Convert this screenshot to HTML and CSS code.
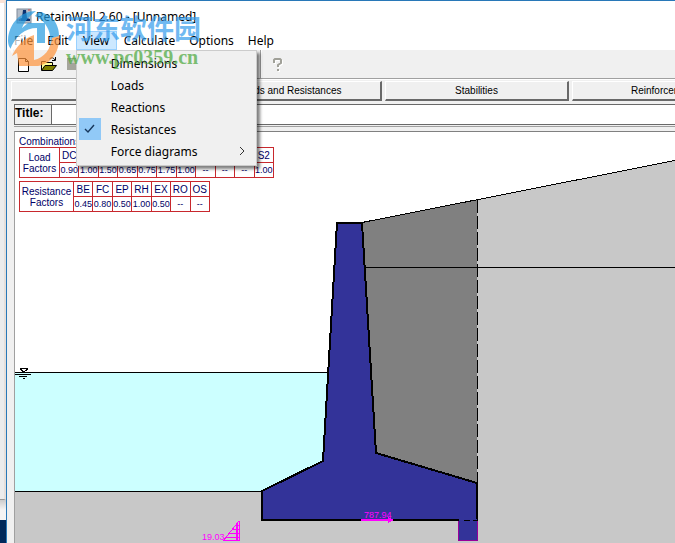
FILE: index.html
```html
<!DOCTYPE html>
<html lang="en">
<head>
<meta charset="utf-8">
<title>RetainWall 2.60</title>
<link rel="stylesheet" href="styles.css">
</head>
<body>
<div class="desktop">
  <div class="desktop-edge"><div class="edge-window"></div><div class="edge-shadow"></div></div>
  <main class="window">
    <header class="titlebar">
      <svg class="app-icon" width="16" height="16" viewBox="0 0 16 16" aria-hidden="true">
        <rect x="1" y="1" width="14" height="14" fill="#b4bdc9" stroke="#7f8b9c"/>
        <path d="M7 2h3l1 8 3 1v2H3v-2l3-1z" fill="#0b3270"/>
        <path d="M1 12h4M12 2h2" stroke="#d74b4b"/>
      </svg>
      <span>RetainWall 2.60 - [Unnamed]</span>
    </header>
    <nav class="menubar">
      <button class="menu-title">File</button>
      <button class="menu-title">Edit</button>
      <div class="menu-holder">
        <button class="menu-title open">View</button>
        <div class="menu">
          <button class="item"><span class="tick"></span><span>Dimensions</span></button>
          <button class="item"><span class="tick"></span><span>Loads</span></button>
          <button class="item"><span class="tick"></span><span>Reactions</span></button>
          <button class="item"><span class="tick on"><svg width="12" height="12" viewBox="0 0 12 12"><path d="M1 6l3 3 6-7" fill="none" stroke="#17375c" stroke-width="1.4"/></svg></span><span>Resistances</span></button>
          <button class="item"><span class="tick"></span><span>Force diagrams</span><svg class="chevron" width="6" height="10" viewBox="0 0 6 10"><path d="M1 1l4 4-4 4" fill="none" stroke="#333"/></svg></button>
        </div>
      </div>
      <button class="menu-title">Calculate</button>
      <button class="menu-title">Options</button>
      <button class="menu-title">Help</button>
    </nav>
    <div class="toolbar">
      <button class="tool" aria-label="New">
        <svg width="18" height="18" viewBox="0 0 18 18"><path d="M3.500 3.500h7l3 3v10h-10z" fill="#fff" stroke="#000"/><path d="M10.500 3.500v3h3" fill="none" stroke="#000"/></svg>
      </button>
      <button class="tool" aria-label="Open">
        <svg width="18" height="18" viewBox="0 0 18 18"><path d="M1.500 15V6.500h4l1 1h6V10" fill="#ffff9a" stroke="#000"/><path d="M1.500 15.500L5 10.500h11.500l-4 5z" fill="#808000" stroke="#000"/><path d="M9.500 4q3-3 5.500 1M15.500 2v3.500H12" fill="none" stroke="#000"/></svg>
      </button>
      <button class="tool" aria-label="Save">
        <svg width="18" height="18" viewBox="0 0 18 18"><path d="M2 3h13v12H2z" fill="#a5a59c"/><path d="M5 4h7v4H5z" fill="#c8c8c0"/></svg>
      </button>
      <span class="tool-divider"></span>
      <button class="tool" aria-label="Help">
        <svg width="18" height="18" viewBox="0 0 18 18"><path d="M5 8V5l1-1h5l1 1v3L9 10v2M9 14v2" fill="none" stroke="#fff" stroke-width="2" transform="translate(1 1)"/><path d="M5 8V5l1-1h5l1 1v3L9 10v2M9 14v2" fill="none" stroke="#a0a098" stroke-width="2"/></svg>
      </button>
    </div>
    <div class="tabs">
      <button class="tab">Dimensions</button>
      <button class="tab">Loads and Resistances</button>
      <button class="tab">Stabilities</button>
      <button class="tab">Reinforcement</button>
    </div>
    <div class="title-row">
      <label for="title">Title:</label>
      <input id="title" type="text">
    </div>
    <section class="canvas">
      <svg class="drawing" viewBox="15 132 660 411" preserveAspectRatio="xMinYMin slice" shape-rendering="crispEdges">
        <path d="M477 200L675 160V543H477z" fill="#c8c8c8"/>
        <path d="M15 491H262V519H477V543H15z" fill="#c8c8c8"/>
        <path d="M15 372H328L323 461L262 491H15z" fill="#cff"/>
        <path d="M362 223L477 200V483L376 453z" fill="#808080"/>
        <g fill="none" stroke="#000">
          <path d="M362 222.500L675 160.500M364 267.500H675M15 372.500H328M15 491.500H262"/>
          <path d="M477.500 200V483" stroke-dasharray="13 3"/>
          <path d="M20 368.500H28M20 369L24 372L28 369M15 374.500H31M19 376.500H27M23 378.500H25"/>
        </g>
        <path d="M337 223H362L376 453L477 483V520H262V491L323 461L337 223z" fill="#339" stroke="#000" stroke-width="2"/>
        <path d="M458.500 521V540.500H477.500V521" fill="#339" stroke="#909"/>
        <path d="M459 520H477" stroke="#339" stroke-width="2"/>
        <path d="M464 520.500H470M473 520.500H477" stroke="#000"/>
        <g stroke="#f0f" fill="none">
          <path d="M361 520H391" stroke-width="2"/>
          <path d="M388 517l6 3-6 3z" fill="#f0f" stroke="none"/>
          <path d="M239.500 521V541M239 521L223.500 540.500H239M236 525.500H240M232 529.500H240M229 533.500H240M226 537.500H240M236 526v14M237.500 524v17"/>
        </g>
        <g class="force"><text x="364" y="518">787.94</text><text x="202" y="540">19.03</text></g>
      </svg>
      <div class="factors">
        <span class="caption">Combinations</span>
        <table class="loads">
          <colgroup><col class="load-head"></colgroup>
          <tr><th rowspan="2" scope="row">Load<br>Factors</th><th>DC</th><th></th><th></th><th></th><th></th><th></th><th></th><th></th><th></th><th></th><th>S2</th></tr>
          <tr><td>0.90</td><td>1.00</td><td>1.50</td><td>0.65</td><td>0.75</td><td>1.75</td><td>1.00</td><td>--</td><td>--</td><td>--</td><td>1.00</td></tr>
        </table>
        <table class="resistances">
          <colgroup><col class="resistance-head"></colgroup>
          <tr><th rowspan="2" scope="row">Resistance<br>Factors</th><th>BE</th><th>FC</th><th>EP</th><th>RH</th><th>EX</th><th>RO</th><th>OS</th></tr>
          <tr><td>0.45</td><td>0.80</td><td>0.50</td><td>1.00</td><td>0.50</td><td>--</td><td>--</td></tr>
        </table>
      </div>
    </section>
  </main>
  <div class="watermark">
    <svg class="mark" width="54" height="56" viewBox="0 0 54 56" aria-hidden="true">
      <path d="M1 29C2 12 14 0 29 0C24 4 18 9 15 17L21 12H38V32H30V21C19 21 9 29 6 40C2 37 1 33 1 29z" fill="#259be0"/>
      <path d="M31 1C45 2 53 14 52 27C51 40 44 50 32 54C40 46 45 36 43 25C42 17 37 9 28 5z" fill="#259be0"/>
      <path d="M52 25C53 41 44 53 31 55L12 55L10 42L5 45C9 36 17 27 27 24V49C37 47 44 38 45 27z" fill="#ff943c"/>
      <path d="M3 39C8 25 18 17 30 17V22C18 23 9 31 5 43z" fill="#fff"/>
    </svg>
    <div class="site">
      <span class="site-name" lang="zh">河东软件园</span>
      <span class="site-url">www.pc0359.cn</span>
    </div>
  </div>
</div>
</body>
</html>
```
FILE: styles.css
```css
* { box-sizing: border-box; }
body { margin: 0; font-family: "Noto Sans", sans-serif; font-size: 12px; color: #000; }
button { font: inherit; color: inherit; border: 0; padding: 0; background: none; }
.desktop { position: relative; display: flex; height: 100vh; overflow: hidden; }
.desktop-edge { flex: none; width: 6px; display: flex; flex-direction: column; background: #00285a; }
.edge-window { height: 500px; background: linear-gradient(#fff, #ececec 30%); border-top: 3px solid #fbe3d6; border-right: 2px solid #e6dfda; border-bottom: 1px solid #999; }
.edge-shadow { height: 20px; background: linear-gradient(#ccc, #f4f4f4 50%); }
.window { flex: 1; min-width: 0; display: flex; flex-direction: column; background: #f0f0f0; border-top: 1px solid #2878b8; border-left: 1px solid #2878b8; }

.titlebar { display: flex; align-items: center; gap: 4px; height: 30px; padding-left: 9px; background: #fff; }
.menubar { display: flex; height: 19px; background: #fff; }
.menu-title { display: block; height: 19px; padding: 0 7px; line-height: 19px; }
.menu-title.open { width: 41px; background: #cce8ff; box-shadow: inset 0 0 0 1px #99d1ff; }
.menu-holder { position: relative; }
.menu { position: absolute; z-index: 2; top: 19px; left: 0; width: 181px; padding: 1px 2px 3px; background: #f0f0f0; border: 1px solid #ccc; box-shadow: 3px 3px 3px rgba(0, 0, 0, .5); }
.item { display: flex; align-items: center; width: 100%; height: 22px; text-align: left; }
.tick { display: grid; place-items: center; width: 22px; height: 22px; margin-right: 10px; }
.tick.on { background: #91c9f7; }
.chevron { margin: 0 9px 0 auto; }

.toolbar { display: flex; align-items: center; gap: 7px; height: 29px; padding-left: 8px; border-bottom: 1px solid #a0a0a0; }
.tool { height: 18px; }
.tool svg { display: block; }
.tool-divider { width: 2px; height: 28px; margin-left: 170px; border-left: 1px solid #a0a0a0; border-right: 1px solid #fff; }

.tabs { display: flex; gap: 3px; height: 25px; padding: 1px 0 3px 4px; border-top: 1px solid #fff; overflow: hidden; font: 10px "Liberation Sans", sans-serif; }
.tab { flex: none; width: 184px; border: 1px solid; border-width: 1px 2px 2px 1px; border-color: #fff #696969 #696969 #fff; background: #f0f0f0; }

.title-row { display: flex; height: 21px; margin-left: 7px; border: 1px solid #696969; border-right: 0; font: bold 12px "Liberation Sans", sans-serif; }
.title-row label { width: 37px; line-height: 16px; border-right: 1px solid #696969; }
.title-row input { flex: 1; min-width: 0; border: 0; padding: 0 4px; font: inherit; background: #fff; outline: 0; }

.canvas { flex: 1; min-height: 0; display: grid; grid-template: minmax(0, 1fr) / minmax(0, 1fr); margin-left: 7px; border-left: 1px solid #a0a0a0; background: #fff; overflow: hidden; }
.title-row + .canvas { margin-top: 6px; border-top: 1px solid #808080; box-shadow: 0 -4px #f0f0f0, 0 -5px #a0a0a0; }
.drawing { grid-area: 1 / 1; width: 100%; height: 100%; }
.factors { grid-area: 1 / 1; padding: 4px; font: 10px "Liberation Sans", sans-serif; color: #000066; }
.caption { display: block; height: 11px; line-height: 12px; }
table { border-collapse: collapse; table-layout: fixed; margin-bottom: 3px; }
.loads { width: 255px; }
.resistances { width: 191px; }
.load-head { width: 40px; }
.resistance-head { width: 54px; }
th, td { height: 15px; padding: 0; border: 1px solid #c8282d; font-weight: normal; text-align: center; line-height: 11px; white-space: nowrap; }
td { font-size: 9px; }
.force { font: 9px "Liberation Sans", sans-serif; fill: #f0f; }

.watermark { position: absolute; z-index: 3; top: 11px; left: 7px; display: flex; gap: 5px; opacity: .7; pointer-events: none; }
.site { display: flex; flex-direction: column; }
.site-name { font: bold 27px/34px "Noto Sans CJK SC", sans-serif; color: #349cec; }
.site-url { font: bold 20px/24px "Liberation Serif", serif; color: #4aa83c; }
```
